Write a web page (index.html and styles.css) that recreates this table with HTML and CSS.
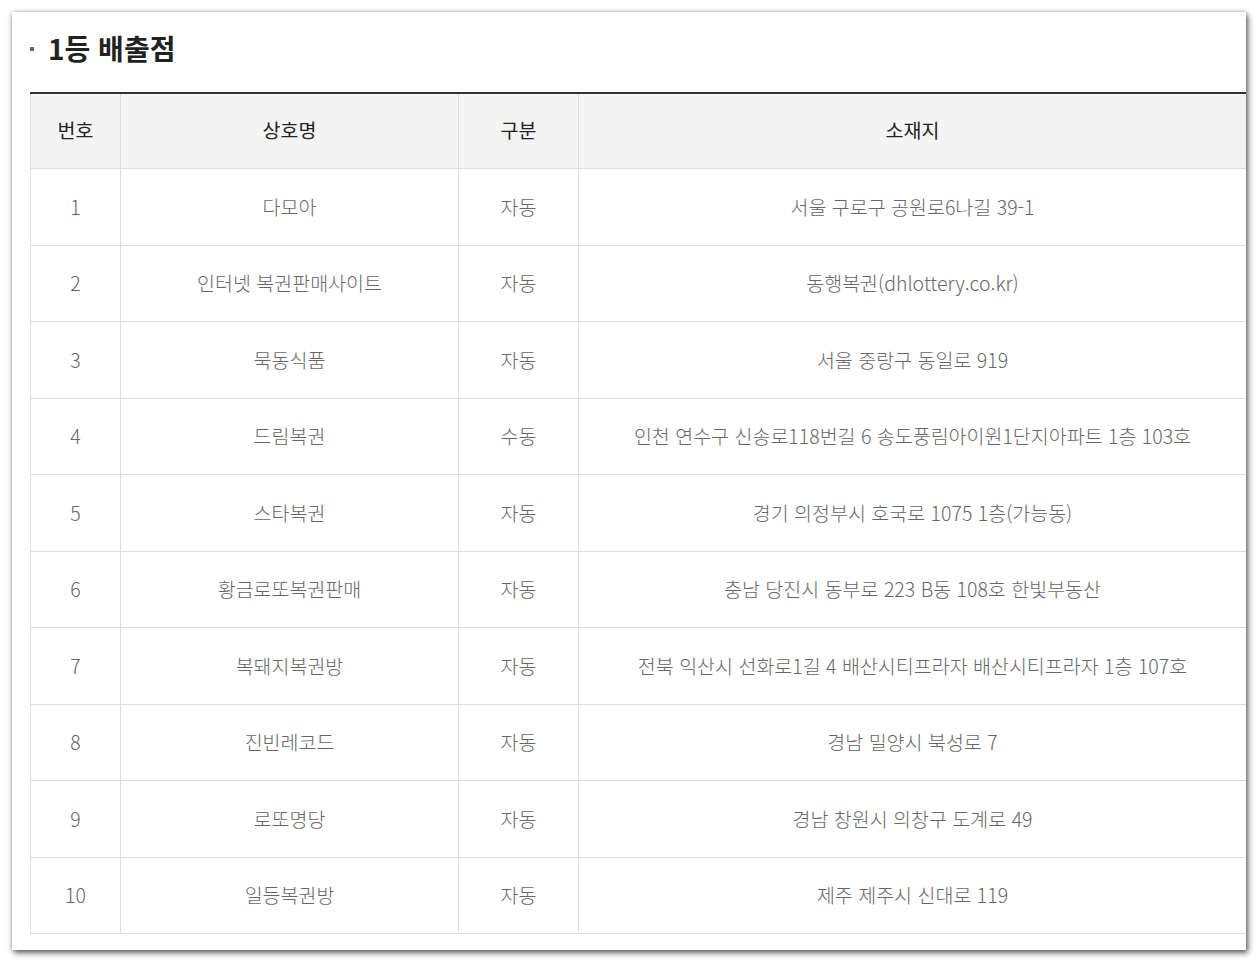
FILE: index.html
```html
<!DOCTYPE html>
<html lang="ko">
<head>
<meta charset="utf-8">
<title>1등 배출점</title>
<link rel="stylesheet" href="styles.css">
</head>
<body>
<div class="stage">
<div class="panel">
  <h2 class="title"><span class="bullet"></span>1등 배출점</h2>
  <table class="stores">
    <colgroup>
      <col class="c-no"><col class="c-name"><col class="c-type"><col class="c-addr">
    </colgroup>
    <thead>
      <tr><th>번호</th><th>상호명</th><th>구분</th><th>소재지</th></tr>
    </thead>
    <tbody>
      <tr><td>1</td><td>다모아</td><td>자동</td><td>서울 구로구 공원로6나길 39-1</td></tr>
      <tr><td>2</td><td>인터넷 복권판매사이트</td><td>자동</td><td>동행복권(dhlottery.co.kr)</td></tr>
      <tr><td>3</td><td>묵동식품</td><td>자동</td><td>서울 중랑구 동일로 919</td></tr>
      <tr><td>4</td><td>드림복권</td><td>수동</td><td>인천 연수구 신송로118번길 6 송도풍림아이원1단지아파트 1층 103호</td></tr>
      <tr><td>5</td><td>스타복권</td><td>자동</td><td>경기 의정부시 호국로 1075 1층(가능동)</td></tr>
      <tr><td>6</td><td>황금로또복권판매</td><td>자동</td><td>충남 당진시 동부로 223 B동 108호 한빛부동산</td></tr>
      <tr><td>7</td><td>복돼지복권방</td><td>자동</td><td>전북 익산시 선화로1길 4 배산시티프라자 배산시티프라자 1층 107호</td></tr>
      <tr><td>8</td><td>진빈레코드</td><td>자동</td><td>경남 밀양시 북성로 7</td></tr>
      <tr><td>9</td><td>로또명당</td><td>자동</td><td>경남 창원시 의창구 도계로 49</td></tr>
      <tr><td>10</td><td>일등복권방</td><td>자동</td><td>제주 제주시 신대로 119</td></tr>
    </tbody>
  </table>
</div>
</div>
</body>
</html>
```

FILE: styles.css
```css
html, body {
  margin: 0;
  padding: 0;
  background: #ffffff;
}
body {
  font-family: "Noto Sans CJK KR", "Noto Sans", sans-serif;
}
.stage {
  width: 1258px;
  height: 963px;
  box-sizing: border-box;
  padding: 12px 12px 13px 12px;
  overflow: hidden;
}
.panel {
  width: 1234px;
  height: 938px;
  box-sizing: border-box;
  padding: 0 0 0 18px;
  background: #fff;
  box-shadow: 2px 3px 6px rgba(0, 0, 0, 0.6), 0 0 4px rgba(0, 0, 0, 0.25);
  overflow: hidden;
}
.title {
  display: flex;
  align-items: center;
  height: 72px;
  margin: 0 0 8px 0;
  font-size: 28px;
  font-weight: 700;
  color: #222;
}
.bullet {
  width: 4px;
  height: 4px;
  background: #666;
  margin: 2px 14px 0 0;
}
.stores {
  border-collapse: collapse;
  table-layout: fixed;
  width: 1216px;
  border-top: 2px solid #333;
}
.c-no { width: 90px; }
.c-name { width: 338px; }
.c-type { width: 120px; }
.c-addr { width: 668px; }
.stores th,
.stores td {
  border: 1px solid #dddddd;
  text-align: center;
  vertical-align: middle;
  padding: 0;
  line-height: 1.2;
}
.stores th {
  height: 72px;
  background: #f4f4f4;
  font-size: 19.5px;
  font-weight: 400;
  color: #222;
  border-top: none;
  padding-bottom: 2px;
}
.stores td {
  height: 74.5px;
  font-size: 19.5px;
  font-weight: 300;
  color: #666;
  padding-bottom: 1px;
}
```
